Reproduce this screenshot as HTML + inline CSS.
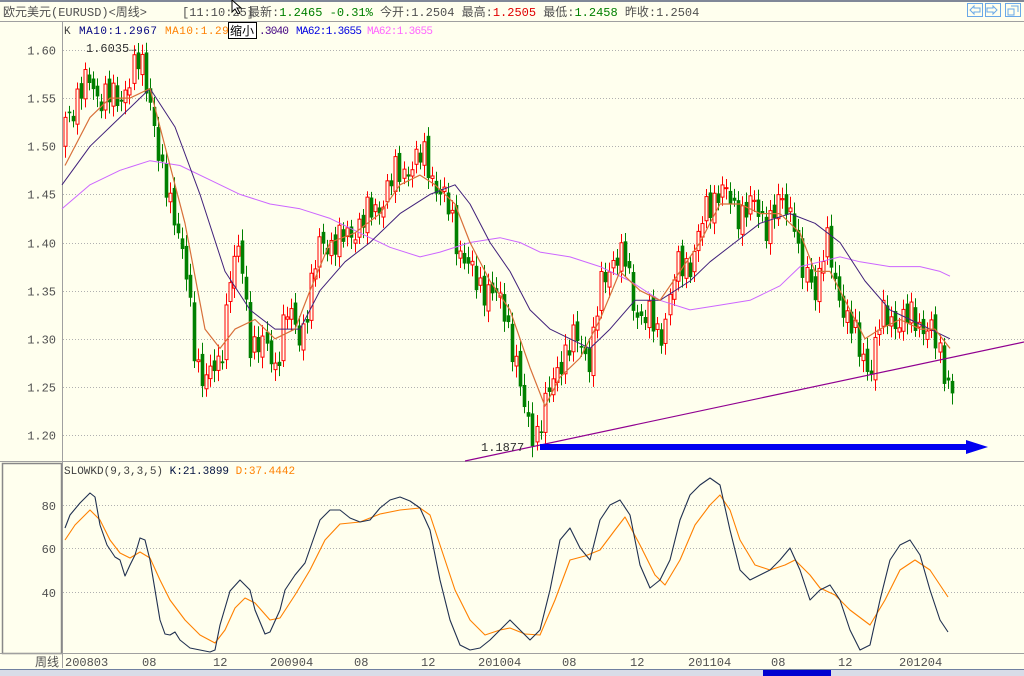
<!DOCTYPE html>
<html><head><meta charset="utf-8"><style>
body{margin:0;width:1024px;height:676px;overflow:hidden;background:#FFFFEE;font-family:"Liberation Mono","Noto Sans CJK SC",monospace;}
svg{position:absolute;left:0;top:0}
</style></head><body>
<svg id="s" width="1024" height="676" xmlns="http://www.w3.org/2000/svg" font-family="Liberation Mono, Noto Sans CJK SC, monospace">
<rect x="0" y="0" width="1024" height="676" fill="#FFFFEE"/>
<rect x="0" y="0" width="1024" height="2" fill="#808898"/>
<line x1="0" y1="21.5" x2="1024" y2="21.5" stroke="#A0A0A0"/>
<text x="3" y="16" font-size="12" fill="#505050">欧元美元(EURUSD)&lt;周线&gt;</text>
<text x="182" y="16" font-size="12" fill="#505050">[11:10:25]</text>
<text x="248" y="16" font-size="12" fill="#505050">最新:<tspan fill="#008000">1.2465 -0.31%</tspan> 今开:1.2504 最高:<tspan fill="#E00000">1.2505</tspan> 最低:<tspan fill="#008000">1.2458</tspan> 昨收:1.2504</text>
<g fill="none" stroke="#6AA8E8"><rect x="967.5" y="3.5" width="15" height="13"/><rect x="985.5" y="3.5" width="15" height="13"/><rect x="1005.5" y="3.5" width="15" height="13"/></g>
<path d="M970 10 l4-4 v2 h6 v4 h-6 v2z M997 10 l-4-4 v2 h-6 v4 h6 v2z" fill="none" stroke="#6AA8E8"/>
<path d="M1008 9h6v6h-6z M1011 6h7v6" fill="none" stroke="#6AA8E8"/>
<line x1="62.5" y1="22" x2="62.5" y2="668" stroke="#A0A0A0"/>
<g font-size="11" textLength="">
<text x="64" y="34" fill="#404040">K</text>
<text x="79" y="34" fill="#000080" textLength="78">MA10:1.2967</text>
<text x="165" y="34" fill="#FF8000" textLength="78">MA10:1.2967</text>
<text x="251" y="34" fill="#400080">M</text>
<text x="259" y="34" fill="#400080" textLength="30">.3040</text>
<text x="296" y="34" fill="#0000E0" textLength="66">MA62:1.3655</text>
<text x="367" y="34" fill="#FF66FF" textLength="66">MA62:1.3655</text>
</g>
<rect x="228.5" y="22.5" width="28" height="16" fill="#FFFFFF" stroke="#000"/>
<text x="230" y="35" font-size="12" fill="#000">缩小</text>
<path d="M232 0 l0 12 l3-3 l3 5 l2-1 l-3-5 l4 0z" fill="#fff" stroke="#000"/>
<g id="grid" stroke="#B0B0B0" stroke-dasharray="1,2"></g>
<g id="lab" font-size="12" fill="#505050" text-anchor="end"></g>
<line x1="0" y1="461.5" x2="1024" y2="461.5" stroke="#A0A0A0"/>
<rect x="2.5" y="463.5" width="59" height="190" fill="none" stroke="#888" stroke-width="1.5"/>
<line x1="0" y1="653.5" x2="1024" y2="653.5" stroke="#A0A0A0"/>
<g id="c"></g>
<g id="ma" fill="none"></g>
<line x1="465" y1="461" x2="1024" y2="342" stroke="#900090" stroke-width="1.2"/>
<text x="481" y="451" font-size="12" fill="#303030">1.1877</text>
<text x="86" y="52" font-size="12" fill="#303030">1.6035→</text>
<rect x="540" y="444" width="432" height="6" fill="#0000F0"/>
<path d="M966 440 l22 7 l-22 7z" fill="#0000F0"/>
<text x="64" y="474" font-size="11" fill="#404040">SLOWKD(9,3,3,5) <tspan fill="#001040">K:21.3899</tspan> <tspan fill="#FF8000">D:37.4442</tspan></text>
<g id="kd" fill="none"></g>
<g font-size="12" fill="#505050">
<text x="35" y="666">周线</text><text x="65" y="666">200803</text><text x="142" y="666">08</text><text x="213" y="666">12</text><text x="270" y="666">200904</text><text x="354" y="666">08</text><text x="421" y="666">12</text><text x="478" y="666">201004</text><text x="562" y="666">08</text><text x="630" y="666">12</text><text x="688" y="666">201104</text><text x="771" y="666">08</text><text x="838" y="666">12</text><text x="899" y="666">201204</text>
</g>
<rect x="0" y="669" width="1024" height="7" fill="#D8DCE8"/>
<rect x="0" y="669" width="1024" height="1" fill="#7080A0"/>
<rect x="763" y="670" width="68" height="6" fill="#0000D0"/>
</svg>
<script>
var NS="http://www.w3.org/2000/svg";
function el(p,t,a){var e=document.createElementNS(NS,t);for(var k in a)e.setAttribute(k,a[k]);p.appendChild(e);return e;}
function Y(p){return 50+(1.60-p)*962.5;}
var g=document.getElementById('grid'),lab=document.getElementById('lab');
var pl=[1.60,1.55,1.50,1.45,1.40,1.35,1.30,1.25,1.20];
pl.forEach(function(p){var y=Math.round(Y(p))+0.5;el(g,'line',{x1:63,y1:y,x2:1024,y2:y});var t=el(lab,'text',{x:56,y:y+4});t.textContent=p.toFixed(2);});
[[80,505],[60,548],[40,592]].forEach(function(a){el(g,'line',{x1:63,y1:a[1]+.5,x2:1024,y2:a[1]+.5});var t=el(lab,'text',{x:56,y:a[1]+5});t.textContent=a[0];});
function interp(pts,x){if(x<=pts[0][0])return pts[0][1];for(var i=1;i<pts.length;i++){if(x<=pts[i][0]){var a=pts[i-1],b=pts[i];return a[1]+(b[1]-a[1])*(x-a[0])/(b[0]-a[0]);}}return pts[pts.length-1][1];}
var kp=[[65,1.53],[90,1.57],[100,1.55],[120,1.55],[140,1.59],[150,1.55],[160,1.47],[175,1.43],[185,1.37],[195,1.28],[205,1.26],[220,1.27],[230,1.37],[240,1.39],[250,1.30],[265,1.29],[275,1.27],[285,1.33],[300,1.30],[320,1.40],[340,1.40],[360,1.42],[380,1.44],[395,1.47],[410,1.48],[425,1.49],[435,1.46],[450,1.43],[460,1.39],[475,1.36],[490,1.35],[505,1.33],[515,1.28],[525,1.22],[535,1.20],[545,1.23],[560,1.28],[575,1.30],[590,1.28],[600,1.35],[615,1.39],[625,1.38],[635,1.33],[650,1.32],[660,1.30],[675,1.37],[690,1.38],[705,1.43],[720,1.46],[735,1.43],[750,1.44],[765,1.42],[780,1.44],[795,1.43],[800,1.37],[815,1.35],[825,1.41],[835,1.35],[850,1.32],[860,1.28],[870,1.27],[880,1.32],[900,1.32],[915,1.32],[930,1.31],[940,1.28],[950,1.25]];
var cg=document.getElementById('c');var prev=1.50;
for(var i=0;i<=220;i++){var x=65+i*4.03;var c=interp(kp,x)+0.012*Math.sin(i*2.7)+0.008*Math.sin(i*5.3);
var o=prev+0.006*Math.sin(i*1.9);var hi=Math.max(o,c)+0.006+0.006*Math.abs(Math.sin(i*3.1));var lo=Math.min(o,c)-0.006-0.006*Math.abs(Math.cos(i*2.3));
var up=c>=o;var col=up?'#FF0000':'#008000';var xr=Math.round(x);
el(cg,'line',{x1:xr+.5,y1:Y(hi),x2:xr+.5,y2:Y(lo),stroke:col});
var yt=Y(Math.max(o,c)),yb=Y(Math.min(o,c));if(yb-yt<1)yb=yt+1;
el(cg,'rect',{x:xr-1,y:yt,width:3,height:yb-yt,fill:up?'#FFFFEE':'#008000',stroke:col,'stroke-width':up?1:0.6});
prev=c;}
function poly(par,pts,col,conv,w){var s=pts.map(function(p){return p[0]+','+(conv?Y(p[1]):p[1]).toFixed(1)}).join(' ');el(par,'polyline',{points:s,stroke:col,'stroke-width':w||1.2,'stroke-linejoin':'round'});}
var ma=document.getElementById('ma');
poly(ma,[[62,1.435],[90,1.46],[120,1.475],[150,1.485],[180,1.48],[210,1.465],[240,1.45],[270,1.44],[300,1.435],[330,1.425],[360,1.41],[390,1.395],[420,1.385],[440,1.39],[470,1.40],[500,1.405],[520,1.40],[540,1.39],[570,1.385],[600,1.375],[630,1.36],[660,1.34],[690,1.33],[720,1.335],[750,1.34],[780,1.355],[800,1.375],[820,1.38],[840,1.385],[860,1.38],[890,1.375],[920,1.375],[940,1.37],[950,1.365]],'#CC66FF',true,1);
poly(ma,[[62,1.46],[90,1.50],[120,1.53],[150,1.56],[175,1.52],[200,1.45],[225,1.37],[250,1.33],[275,1.31],[300,1.31],[320,1.35],[345,1.38],[370,1.40],[400,1.43],[430,1.45],[455,1.46],[470,1.44],[490,1.40],[510,1.37],[530,1.33],[550,1.31],[570,1.30],[590,1.29],[610,1.31],[635,1.34],[660,1.34],[690,1.36],[710,1.38],[735,1.40],[760,1.42],[790,1.43],[815,1.42],[840,1.40],[865,1.36],[890,1.33],[910,1.32],[930,1.31],[950,1.30]],'#40207A',true,1);
poly(ma,[[65,1.48],[90,1.53],[110,1.55],[130,1.55],[150,1.56],[165,1.50],[185,1.42],[205,1.31],[220,1.29],[235,1.31],[255,1.32],[275,1.30],[295,1.31],[310,1.35],[330,1.40],[355,1.41],[380,1.43],[400,1.46],[420,1.47],[435,1.46],[455,1.44],[470,1.40],[490,1.36],[510,1.33],[530,1.27],[545,1.23],[560,1.26],[580,1.28],[600,1.32],[620,1.37],[640,1.35],[660,1.34],[680,1.37],[700,1.40],[720,1.44],[740,1.44],[760,1.43],[780,1.43],[800,1.41],[815,1.37],[830,1.37],[850,1.33],[865,1.30],[880,1.31],[900,1.32],[920,1.31],[935,1.31],[950,1.29]],'#D8703A',true,1.2);
var kd=document.getElementById('kd');
poly(kd,[[65,540],[75,525],[90,510],[100,520],[110,540],[120,553],[130,558],[140,552],[150,558],[160,580],[170,600],[185,620],[200,635],[215,643],[225,630],[235,608],[245,598],[255,603],[270,620],[280,618],[295,595],[310,570],[325,540],[340,524],[360,522],[380,514],[400,510],[420,508],[430,515],[440,545],[455,590],[470,620],[485,635],[500,630],[510,628],[525,634],[540,635],[555,600],[570,560],[585,556],[600,550],[615,530],[625,517],[640,545],[655,575],[665,585],[680,560],[695,525],[710,505],[720,495],[730,510],[740,540],[755,565],[770,570],[785,565],[795,560],[810,575],[820,588],[835,595],[850,610],[870,625],[885,600],[900,570],[915,560],[930,570],[948,597]],'#FF8000',false,1.1);
poly(kd,[[65,528],[70,515],[80,503],[90,493],[95,497],[100,525],[107,545],[115,557],[120,560],[125,576],[130,565],[135,555],[140,538],[145,540],[150,560],[155,590],[160,620],[165,634],[170,635],[175,632],[180,640],[190,648],[200,650],[210,652],[215,650],[220,625],[230,591],[240,580],[250,590],[255,610],[265,634],[270,632],[280,610],[285,590],[295,575],[305,563],[320,520],[330,510],[340,510],[350,518],[360,522],[370,520],[380,508],[390,500],[400,497],[410,501],[420,508],[430,530],[440,580],[450,620],[460,645],[470,650],[480,648],[490,640],[500,630],[510,620],[520,630],[530,640],[540,630],[550,590],[560,540],[570,528],[580,548],[590,560],[600,520],[610,505],[620,500],[630,515],[640,565],[650,588],[660,580],[670,560],[680,520],[690,495],[700,485],[710,478],[720,485],[730,530],[740,570],[750,580],[760,575],[770,570],[780,560],[790,548],[800,570],[810,600],[820,590],[830,585],[840,600],[850,630],[860,650],[870,645],[880,600],[890,560],[900,545],[910,540],[920,555],[930,590],[940,620],[948,632]],'#203050',false,1.1);
</script>
</body></html>
